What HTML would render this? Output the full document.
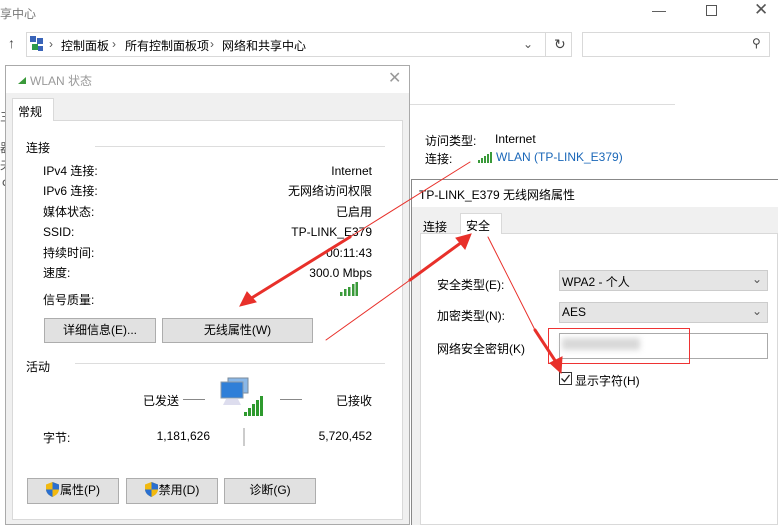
<!DOCTYPE html>
<html><head><meta charset="utf-8"><style>
*{margin:0;padding:0;box-sizing:border-box}
body{width:778px;height:525px;overflow:hidden;background:#fff;position:relative;font-family:"Liberation Sans","Noto Sans CJK SC",sans-serif;font-size:12px;color:#000}
.a{position:absolute;white-space:nowrap}
.btn{position:absolute;background:#e1e1e1;border:1px solid #adadad;text-align:center;line-height:22px}
.r{text-align:right}
.sh{display:inline-block;vertical-align:-3px;margin-right:1px}
</style></head><body>
<div class="a" style="left:0;top:5px;color:#777;font-size:12px">享中心</div>
<div class="a" style="left:652px;top:2px;color:#555;font-size:14px">—</div>
<div class="a" style="left:706px;top:5px;width:11px;height:11px;border:1px solid #555"></div>
<div class="a" style="left:754px;top:0px;color:#555;font-size:17px">✕</div>
<div class="a" style="left:8px;top:35px;color:#444;font-size:14px">↑</div>
<div class="a" style="left:26px;top:32px;width:546px;height:25px;border:1px solid #d9d9d9"></div>
<svg class="a" style="left:30px;top:36px" width="14" height="16"><rect x="0" y="0" width="6" height="6" fill="#3a64b8"/><rect x="7" y="2" width="6" height="6" fill="#3a64b8"/><rect x="2" y="8" width="6" height="6" fill="#2e9a4a"/><rect x="8" y="10" width="5" height="5" fill="#3a64b8"/></svg>
<div class="a" style="left:49px;top:37px;color:#555">›</div>
<div class="a" style="left:61px;top:37px">控制面板</div>
<div class="a" style="left:112px;top:37px;color:#555">›</div>
<div class="a" style="left:125px;top:37px">所有控制面板项</div>
<div class="a" style="left:210px;top:37px;color:#555">›</div>
<div class="a" style="left:222px;top:37px">网络和共享中心</div>
<div class="a" style="left:523px;top:37px;color:#555">⌄</div>
<div class="a" style="left:545px;top:33px;width:1px;height:23px;background:#d9d9d9"></div>
<div class="a" style="left:554px;top:36px;color:#444;font-size:14px">↻</div>
<div class="a" style="left:582px;top:32px;width:188px;height:25px;border:1px solid #d9d9d9"></div>
<div class="a" style="left:752px;top:36px;color:#444">⚲</div>
<div class="a" style="left:0;top:108px;color:#555">三<br><br>器<br>夬<br>ｄ</div>
<div class="a" style="left:403px;top:118px;width:2px;height:70px;background:#ddd"></div>
<div class="a" style="left:410px;top:104px;width:265px;height:1px;background:#ddd"></div>
<div class="a" style="left:425px;top:132px">访问类型:</div>
<div class="a" style="left:495px;top:132px">Internet</div>
<div class="a" style="left:425px;top:150px">连接:</div>
<div class="a" style="left:496px;top:150px;color:#1a67b8">WLAN (TP-LINK_E379)</div>
<svg class="a" style="left:478px;top:152px" width="14" height="11"><g fill="#3a9a3a"><rect x="0" y="8" width="2" height="3"/><rect x="3" y="6" width="2" height="5"/><rect x="6" y="4" width="2" height="7"/><rect x="9" y="2" width="2" height="9"/><rect x="12" y="0" width="2" height="11"/></g></svg>
<div class="a" style="left:5px;top:65px;width:405px;height:460px;background:#f0f0f0;border:1px solid #aaa"></div>
<div class="a" style="left:6px;top:66px;width:403px;height:27px;background:#fff"></div>
<svg class="a" style="left:18px;top:77px" width="8" height="7"><path d="M0 7L8 0V7Z" fill="#3a9a3a"/></svg>
<div class="a" style="left:30px;top:72px;color:#999">WLAN 状态</div>
<div class="a" style="left:388px;top:68px;color:#999;font-size:16px">✕</div>
<div class="a" style="left:12px;top:120px;width:391px;height:400px;background:#fff;border:1px solid #d9d9d9"></div>
<div class="a" style="left:12px;top:98px;width:42px;height:23px;background:#fff;border:1px solid #d9d9d9;border-bottom:none;padding:4px 0 0 5px">常规</div>
<div class="a" style="left:26px;top:139px">连接</div>
<div class="a" style="left:95px;top:146px;width:290px;height:1px;background:#ddd"></div>
<div class="a" style="left:43px;top:161px;line-height:20.4px">IPv4 连接:<br>IPv6 连接:<br>媒体状态:<br>SSID:<br>持续时间:<br>速度:</div>
<div class="a r" style="left:200px;width:172px;top:161px;line-height:20.4px">Internet<br>无网络访问权限<br>已启用<br>TP-LINK_E379<br>00:11:43<br>300.0 Mbps</div>
<div class="a" style="left:43px;top:291px">信号质量:</div>
<svg class="a" style="left:340px;top:282px" width="18" height="14"><g fill="#3a9a3a"><rect x="0" y="10" width="2.5" height="4"/><rect x="4" y="7" width="2.5" height="7"/><rect x="8" y="5" width="2.5" height="9"/><rect x="12" y="2" width="2.5" height="12"/><rect x="15.5" y="0" width="2.5" height="14"/></g></svg>
<div class="btn" style="left:44px;top:318px;width:112px;height:25px">详细信息(E)...</div>
<div class="btn" style="left:162px;top:318px;width:151px;height:25px">无线属性(W)</div>
<div class="a" style="left:26px;top:358px">活动</div>
<div class="a" style="left:75px;top:363px;width:310px;height:1px;background:#ddd"></div>
<div class="a" style="left:143px;top:392px">已发送</div>
<div class="a" style="left:183px;top:399px;width:22px;height:1px;background:#888"></div>
<svg class="a" style="left:220px;top:377px" width="44" height="40"><rect x="8" y="1" width="20" height="15" fill="#8ab8e8" stroke="#7a8a9a"/><rect x="1" y="5" width="22" height="16" fill="#2f7fd8" stroke="#8a9aaa"/><path d="M6 22h12l3 6H3z" fill="#dde"/><g fill="#2e9a2e"><rect x="24" y="35" width="3" height="4"/><rect x="28" y="31" width="3" height="8"/><rect x="32" y="27" width="3" height="12"/><rect x="36" y="23" width="3" height="16"/><rect x="40" y="19" width="3" height="20"/></g></svg>
<div class="a" style="left:280px;top:399px;width:22px;height:1px;background:#888"></div>
<div class="a" style="left:336px;top:392px">已接收</div>
<div class="a" style="left:43px;top:429px">字节:</div>
<div class="a r" style="left:120px;width:90px;top:429px">1,181,626</div>
<div class="a" style="left:243px;top:428px;width:2px;height:18px;background:#ccc"></div>
<div class="a r" style="left:282px;width:90px;top:429px">5,720,452</div>
<div class="btn" style="left:27px;top:478px;width:92px;height:26px"><svg class="sh" width="13" height="15"><path d="M6.5 0L13 2.5V7C13 11 10 13.5 6.5 15C3 13.5 0 11 0 7V2.5Z" fill="#f2b90f"/><path d="M6.5 0L13 2.5V7.5H6.5ZM6.5 7.5H0V7C0 11 3 13.5 6.5 15Z" fill="#2a6fd0"/></svg>属性(P)</div>
<div class="btn" style="left:126px;top:478px;width:92px;height:26px"><svg class="sh" width="13" height="15"><path d="M6.5 0L13 2.5V7C13 11 10 13.5 6.5 15C3 13.5 0 11 0 7V2.5Z" fill="#f2b90f"/><path d="M6.5 0L13 2.5V7.5H6.5ZM6.5 7.5H0V7C0 11 3 13.5 6.5 15Z" fill="#2a6fd0"/></svg>禁用(D)</div>
<div class="btn" style="left:224px;top:478px;width:92px;height:26px">诊断(G)</div>
<div class="a" style="left:411px;top:179px;width:367px;height:346px;background:#f0f0f0;border-left:1px solid #888;border-top:1px solid #888"></div>
<div class="a" style="left:412px;top:180px;width:366px;height:27px;background:#fff"></div>
<div class="a" style="left:419px;top:186px">TP-LINK_E379 无线网络属性</div>
<div class="a" style="left:420px;top:233px;width:358px;height:292px;background:#fff;border:1px solid #d9d9d9"></div>
<div class="a" style="left:423px;top:218px">连接</div>
<div class="a" style="left:460px;top:213px;width:42px;height:21px;background:#fff;border:1px solid #d9d9d9;border-bottom:none;padding:3px 0 0 5px">安全</div>
<div class="a" style="left:437px;top:276px">安全类型(E):</div>
<div class="a" style="left:559px;top:270px;width:209px;height:21px;background:#e5e5e5;border:1px solid #ccc;padding:2px 0 0 2px">WPA2 - 个人<span style="position:absolute;right:5px;top:1px;color:#555">⌄</span></div>
<div class="a" style="left:437px;top:307px">加密类型(N):</div>
<div class="a" style="left:559px;top:302px;width:209px;height:21px;background:#e5e5e5;border:1px solid #ccc;padding:2px 0 0 2px">AES<span style="position:absolute;right:5px;top:1px;color:#555">⌄</span></div>
<div class="a" style="left:437px;top:340px">网络安全密钥(K)</div>
<div class="a" style="left:559px;top:333px;width:209px;height:26px;background:#fff;border:1px solid #aaa"></div>
<div class="a" style="left:562px;top:338px;width:78px;height:12px;background:#d8d8d8;filter:blur(3px)"></div>
<div class="a" style="left:548px;top:328px;width:142px;height:36px;border:1px solid #e33"></div>
<svg class="a" style="left:559px;top:372px" width="13" height="13"><rect x="0.5" y="0.5" width="12" height="12" fill="#fff" stroke="#333"/><path d="M2.5 6.5L5.5 9.5L10.5 3" fill="none" stroke="#222" stroke-width="1.3"/></svg>
<div class="a" style="left:575px;top:372px">显示字符(H)</div>
<svg class="a" style="left:0;top:0" width="778" height="525">
<g fill="#e8302a" stroke="#e8302a" stroke-linecap="round">
<line x1="470" y1="162" x2="350" y2="237" stroke-width="1"/>
<line x1="350" y1="237" x2="250" y2="299" stroke-width="3"/>
<path d="M240 306L247 292L256 302Z"/>
<line x1="326" y1="340" x2="410" y2="280" stroke-width="1"/>
<line x1="410" y1="280" x2="462" y2="242" stroke-width="3"/>
<path d="M471 234L456 238L465 249Z"/>
<line x1="488" y1="237" x2="535" y2="330" stroke-width="1"/>
<line x1="535" y1="330" x2="556" y2="362" stroke-width="3"/>
<path d="M561 373L550 363L562 357Z"/>
</g></svg>
</body></html>
